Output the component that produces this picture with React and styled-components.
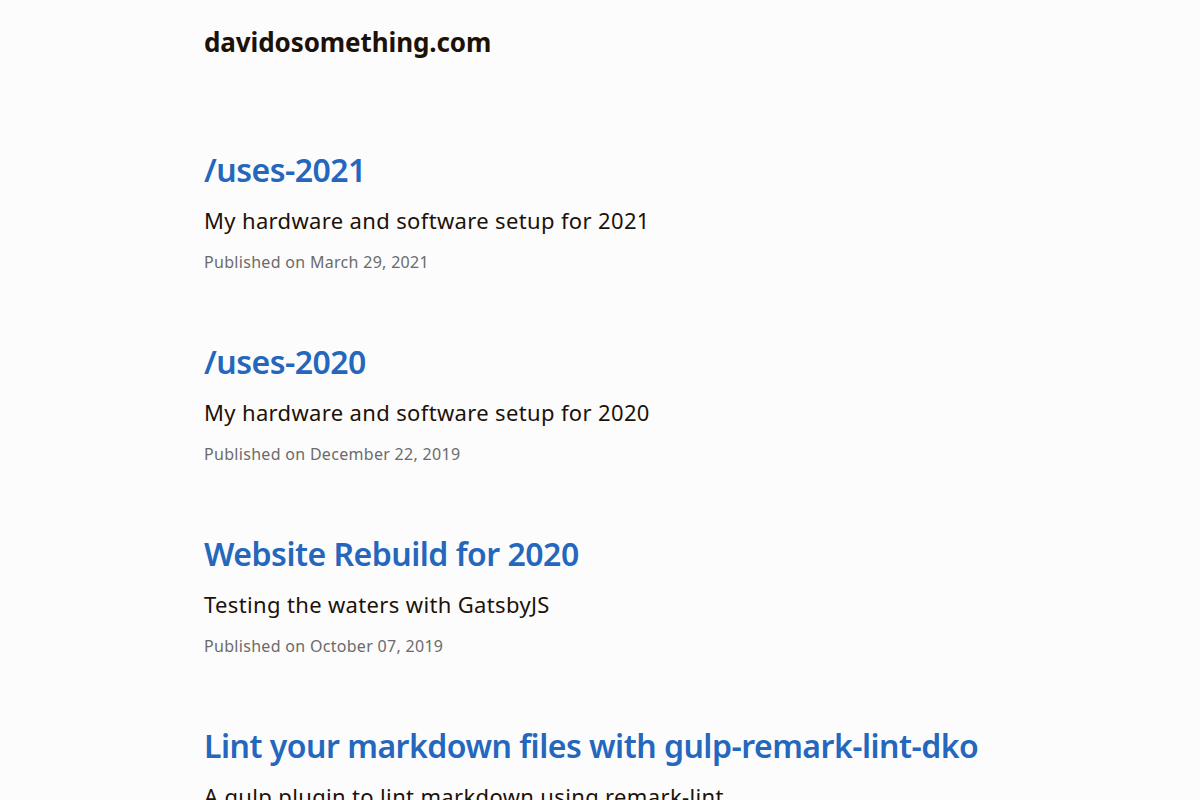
import React from "react";
import styled, { createGlobalStyle } from "styled-components";

const GlobalStyle = createGlobalStyle`
  html, body {
    margin: 0;
    padding: 0;
    background: #fcfcfc;
  }
  body {
    font-family: "Noto Sans", "DejaVu Sans", sans-serif;
    color: #1c1209;
  }
`;

const Page = styled.div`
  width: 792px;
  margin: 0 auto;
`;

const Header = styled.header`
  height: 84px;
  display: flex;
  align-items: center;
`;

const Brand = styled.a`
  font-size: 26px;
  font-weight: 700;
  color: #1c1209;
  text-decoration: none;
  letter-spacing: -0.1px;
`;

const PostList = styled.main`
  display: flex;
  flex-direction: column;
  padding-top: 60px;
`;

const Post = styled.article`
  height: 192px;
  display: flex;
  flex-direction: column;
`;

const Title = styled.a`
  font-size: 32px;
  font-weight: 600;
  color: #2467bc;
  text-decoration: none;
  line-height: 52px;
  letter-spacing: -0.5px;
  white-space: nowrap;
`;

const Summary = styled.p`
  margin: 0;
  padding-top: 2px;
  font-size: 22px;
  line-height: 44px;
  letter-spacing: 0.35px;
  color: #1c1209;
`;

const Published = styled.p`
  margin: 0;
  font-size: 16px;
  line-height: 40px;
  letter-spacing: 0.3px;
  color: #6b6b6b;
`;

const posts = [
  { title: "/uses-2021", summary: "My hardware and software setup for 2021", date: "March 29, 2021" },
  { title: "/uses-2020", summary: "My hardware and software setup for 2020", date: "December 22, 2019" },
  { title: "Website Rebuild for 2020", summary: "Testing the waters with GatsbyJS", date: "October 07, 2019" },
  { title: "Lint your markdown files with gulp-remark-lint-dko", summary: "A gulp plugin to lint markdown using remark-lint", date: "August 14, 2019" },
];

export default function App() {
  return (
    <>
      <GlobalStyle />
      <Page>
        <Header>
          <Brand href="#">davidosomething.com</Brand>
        </Header>
        <PostList>
          {posts.map((p) => (
            <Post key={p.title}>
              <Title href="#">{p.title}</Title>
              <Summary>{p.summary}</Summary>
              <Published>Published on {p.date}</Published>
            </Post>
          ))}
        </PostList>
      </Page>
    </>
  );
}
